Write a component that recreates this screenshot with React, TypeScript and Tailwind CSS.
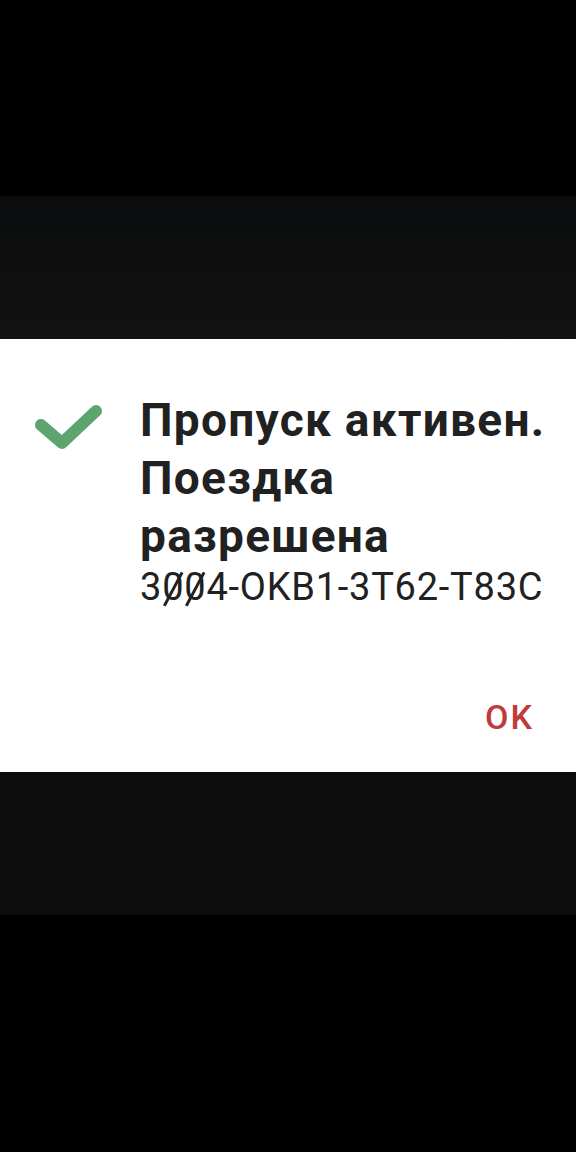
function SlashedZero() {
  return (
    <span className="relative inline-block">
      0
      <span className="absolute left-1/2 top-[6px] h-[38px] w-[2.5px] -translate-x-1/2 rotate-[28deg] bg-[#212121]" />
    </span>
  )
}

export default function App() {
  return (
    <div className="flex h-[1152px] w-[576px] flex-col bg-black font-['Roboto',sans-serif]">
      <div className="h-[196px] shrink-0 bg-black" />
      <div className="h-[143px] shrink-0 bg-gradient-to-b from-[#0b0c0d] to-[#121212]" />
      <div className="flex h-[433px] shrink-0 flex-col bg-white">
        <div className="flex pt-[52px]">
          <div className="flex w-[140px] shrink-0 justify-start pl-[33px] pt-[11px]">
            <svg width="72" height="52" viewBox="0 0 72 52" fill="none">
              <polyline
                points="8,23 29,41 63,9"
                stroke="#5ea46e"
                strokeWidth="12"
                strokeLinecap="round"
                strokeLinejoin="round"
              />
            </svg>
          </div>
          <div className="flex w-[416px] flex-col">
            <h1 className="text-[46px] font-bold leading-[58px] tracking-[0.028em] text-[#212121]">
              Пропуск активен.
              <br />
              Поездка
              <br />
              разрешена
            </h1>
            <p className="-mt-[1px] text-[38px] leading-[46px] tracking-[0.02em] text-[#212121]">
              3<SlashedZero />
              <SlashedZero />
              4-OKB1-3T62-T83C
            </p>
          </div>
        </div>
        <div className="mt-auto flex justify-end pb-[29px] pr-[42px]">
          <button className="text-[34px] font-medium tracking-[0.06em] text-[#c0393b]">OK</button>
        </div>
      </div>
      <div className="h-[143px] shrink-0 bg-[#0c0c0c]" />
      <div className="flex-1 bg-black" />
    </div>
  )
}
